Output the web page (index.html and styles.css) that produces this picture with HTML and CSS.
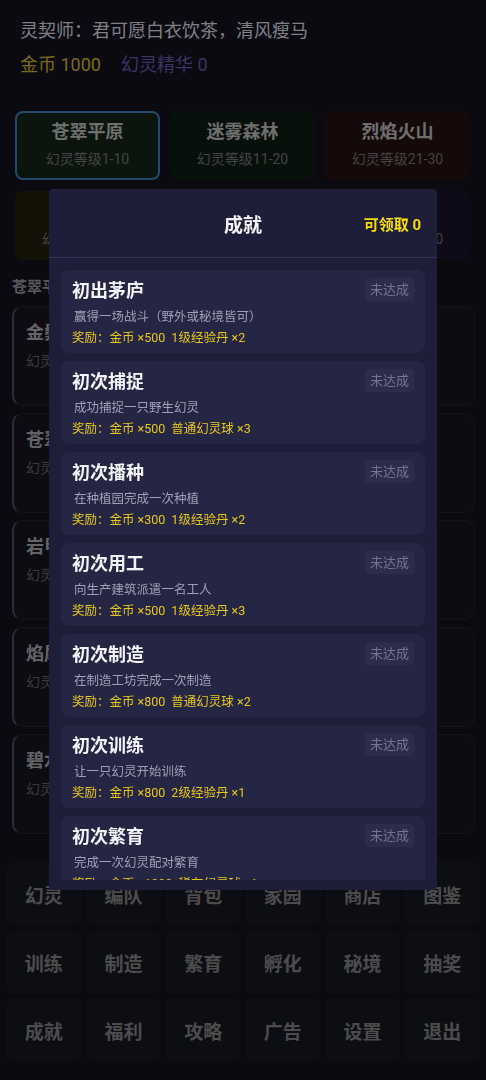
FILE: index.html
```html
<!DOCTYPE html>
<html lang="zh-CN">
<head>
    <meta charset="UTF-8">
    <meta name="viewport" content="width=device-width, initial-scale=1.0">
    <title>灵契师</title>
    <link rel="stylesheet" href="styles.css">
</head>
<body>
    <div class="page">
        <header class="top">
            <div class="player">灵契师：君可愿白衣饮茶，清风瘦马</div>
            <div class="wallet">
                <span class="gold">金币 1000</span>
                <span class="essence">幻灵精华 0</span>
            </div>
        </header>

        <div class="regions">
            <div class="region green active"><div class="region-name">苍翠平原</div><div class="region-lv">幻灵等级1-10</div></div>
            <div class="region forest"><div class="region-name">迷雾森林</div><div class="region-lv">幻灵等级11-20</div></div>
            <div class="region fire"><div class="region-name">烈焰火山</div><div class="region-lv">幻灵等级21-30</div></div>
            <div class="region rock"><div class="region-name">岩晶峡谷</div><div class="region-lv">幻灵等级31-40</div></div>
            <div class="region water"><div class="region-name">碧波湖畔</div><div class="region-lv">幻灵等级41-50</div></div>
            <div class="region shadow"><div class="region-name">幽影深渊</div><div class="region-lv">幻灵等级51-60</div></div>
        </div>

        <h2 class="section-title">苍翠平原</h2>
        <div class="wild-list">
            <div class="wild"><div class="wild-name">金鬃狮</div><div class="wild-lv">幻灵等级 3</div></div>
            <div class="wild"><div class="wild-name">苍翠鹿</div><div class="wild-lv">幻灵等级 5</div></div>
            <div class="wild"><div class="wild-name">岩甲龟</div><div class="wild-lv">幻灵等级 6</div></div>
            <div class="wild"><div class="wild-name">焰尾狐</div><div class="wild-lv">幻灵等级 8</div></div>
            <div class="wild"><div class="wild-name">碧水蛟</div><div class="wild-lv">幻灵等级 10</div></div>
        </div>

        <nav class="menu">
            <div class="menu-item">幻灵</div>
            <div class="menu-item">编队</div>
            <div class="menu-item">背包</div>
            <div class="menu-item">家园</div>
            <div class="menu-item">商店</div>
            <div class="menu-item">图鉴</div>
            <div class="menu-item">训练</div>
            <div class="menu-item">制造</div>
            <div class="menu-item">繁育</div>
            <div class="menu-item">孵化</div>
            <div class="menu-item">秘境</div>
            <div class="menu-item">抽奖</div>
            <div class="menu-item">成就</div>
            <div class="menu-item">福利</div>
            <div class="menu-item">攻略</div>
            <div class="menu-item">广告</div>
            <div class="menu-item">设置</div>
            <div class="menu-item">退出</div>
        </nav>
    </div>

    <div class="mask"></div>

    <div class="modal">
        <div class="modal-head">
            <span></span>
            <h3 class="modal-title">成就</h3>
            <span class="claimable">可领取 0</span>
        </div>
        <div class="ach-list">
            <div class="ach">
                <div class="ach-top"><span class="ach-name">初出茅庐</span><span class="ach-state">未达成</span></div>
                <div class="ach-desc">赢得一场战斗（野外或秘境皆可）</div>
                <div class="ach-reward">奖励：金币 ×500<span class="gap"></span>1级经验丹 ×2</div>
            </div>
            <div class="ach">
                <div class="ach-top"><span class="ach-name">初次捕捉</span><span class="ach-state">未达成</span></div>
                <div class="ach-desc">成功捕捉一只野生幻灵</div>
                <div class="ach-reward">奖励：金币 ×500<span class="gap"></span>普通幻灵球 ×3</div>
            </div>
            <div class="ach">
                <div class="ach-top"><span class="ach-name">初次播种</span><span class="ach-state">未达成</span></div>
                <div class="ach-desc">在种植园完成一次种植</div>
                <div class="ach-reward">奖励：金币 ×300<span class="gap"></span>1级经验丹 ×2</div>
            </div>
            <div class="ach">
                <div class="ach-top"><span class="ach-name">初次用工</span><span class="ach-state">未达成</span></div>
                <div class="ach-desc">向生产建筑派遣一名工人</div>
                <div class="ach-reward">奖励：金币 ×500<span class="gap"></span>1级经验丹 ×3</div>
            </div>
            <div class="ach">
                <div class="ach-top"><span class="ach-name">初次制造</span><span class="ach-state">未达成</span></div>
                <div class="ach-desc">在制造工坊完成一次制造</div>
                <div class="ach-reward">奖励：金币 ×800<span class="gap"></span>普通幻灵球 ×2</div>
            </div>
            <div class="ach">
                <div class="ach-top"><span class="ach-name">初次训练</span><span class="ach-state">未达成</span></div>
                <div class="ach-desc">让一只幻灵开始训练</div>
                <div class="ach-reward">奖励：金币 ×800<span class="gap"></span>2级经验丹 ×1</div>
            </div>
            <div class="ach">
                <div class="ach-top"><span class="ach-name">初次繁育</span><span class="ach-state">未达成</span></div>
                <div class="ach-desc">完成一次幻灵配对繁育</div>
                <div class="ach-reward">奖励：金币 ×1000<span class="gap"></span>稀有幻灵球 ×1</div>
            </div>
        </div>
    </div>
</body>
</html>
```

FILE: styles.css
```css
* {
    box-sizing: border-box;
}
body {
    margin: 0;
    background: #12121d;
    font-family: Roboto, "Noto Sans CJK SC", sans-serif;
    color: #e8e8ee;
}
.page {
    height: 1080px;
    overflow: hidden;
}
.top {
    padding: 18px 20px 0;
}
.player {
    font-size: 18px;
    line-height: 26px;
    color: #dcdce4;
}
.wallet {
    margin-top: 8px;
    font-size: 18px;
    line-height: 26px;
    display: flex;
    gap: 20px;
}
.gold {
    color: #d4b72a;
}
.essence {
    color: #6a58ae;
}

/* regions */
.regions {
    display: grid;
    grid-template-columns: repeat(3, 1fr);
    gap: 11px 10px;
    padding: 0 16px 0 15px;
    margin-top: 33px;
}
.region {
    text-align: center;
    padding: 8px 0 10px;
    border-radius: 8px;
    border: 1px solid transparent;
}
.region-name {
    font-size: 18px;
    font-weight: bold;
    line-height: 24px;
    color: #c0c0c0;
}
.region-lv {
    margin-top: 5px;
    font-size: 14px;
    line-height: 20px;
    color: #767676;
}
.region.green { background: #132418; }
.region.active { border: 2px solid #3a80be; padding: 7px 0 9px; }
.region.forest { background: #0f1d13; }
.region.fire { background: #261010; }
.region.rock { background: #231e0c; }
.region.water { background: #0f1a26; }
.region.shadow { background: #1b1228; }

.section-title {
    margin: 16px 0 8px 12px;
    font-size: 15px;
    line-height: 22px;
    color: #9a9aa2;
}
.wild-list {
    display: flex;
    flex-direction: column;
    gap: 7px;
    padding: 0 11px 0 12px;
}
.wild {
    height: 100px;
    padding: 14px 12px 0;
    background: #161620;
    border: 1px solid #232330;
    border-left: 2px solid #4c4c62;
    border-radius: 10px;
}
.wild-name {
    font-size: 18px;
    font-weight: bold;
    line-height: 24px;
    color: #acacb4;
}
.wild-lv {
    margin-top: 6px;
    font-size: 14px;
    line-height: 20px;
    color: #68686f;
}

/* bottom menu */
.menu {
    display: grid;
    grid-template-columns: repeat(6, 1fr);
    grid-auto-rows: 64px;
    gap: 4px;
    padding: 0 6px;
    margin-top: 28px;
}
.menu-item {
    display: flex;
    align-items: center;
    justify-content: center;
    background: #171724;
    border-radius: 8px;
    font-size: 19px;
    font-weight: bold;
    color: #848484;
}

/* modal */
.mask {
    position: fixed;
    inset: 0;
    background: rgba(0, 0, 0, 0.42);
}
.modal {
    position: fixed;
    top: 189px;
    left: 49px;
    width: 388px;
    height: 701px;
    background: #1e1e38;
    border-radius: 4px;
    display: flex;
    flex-direction: column;
    overflow: hidden;
}
.modal-head {
    height: 69px;
    flex: none;
    display: grid;
    grid-template-columns: 1fr auto 1fr;
    align-items: center;
    padding: 0 16px;
    border-bottom: 1px solid #34345a;
}
.modal-title {
    margin: 0;
    font-size: 19px;
    color: #f2f2f6;
}
.claimable {
    justify-self: end;
    font-size: 15px;
    font-weight: bold;
    color: #f7dc0c;
}
.ach-list {
    flex: 1;
    overflow: hidden;
    margin-bottom: 10px;
    padding: 12px 12px 0;
    display: flex;
    flex-direction: column;
    gap: 8px;
}
.ach {
    flex: none;
    height: 83px;
    background: #252544;
    border-radius: 8px;
    padding: 10px 11px 0;
}
.ach-top {
    display: flex;
    justify-content: space-between;
    align-items: flex-start;
}
.ach-name {
    font-size: 18px;
    font-weight: bold;
    line-height: 22px;
    color: #f4f4f8;
}
.ach-state {
    margin-top: -2px;
    padding: 0 5px;
    height: 23px;
    line-height: 23px;
    font-size: 13px;
    color: #75758c;
    background: #2c2c4c;
    border-radius: 4px;
}
.ach-desc {
    margin-top: 6px;
    padding-left: 2px;
    font-size: 12.5px;
    line-height: 18px;
    color: #a0a0b4;
}
.ach-reward {
    margin-top: 3px;
    font-size: 12.5px;
    line-height: 18px;
    color: #e8c81a;
}
.gap {
    display: inline-block;
    width: 6px;
}
```
